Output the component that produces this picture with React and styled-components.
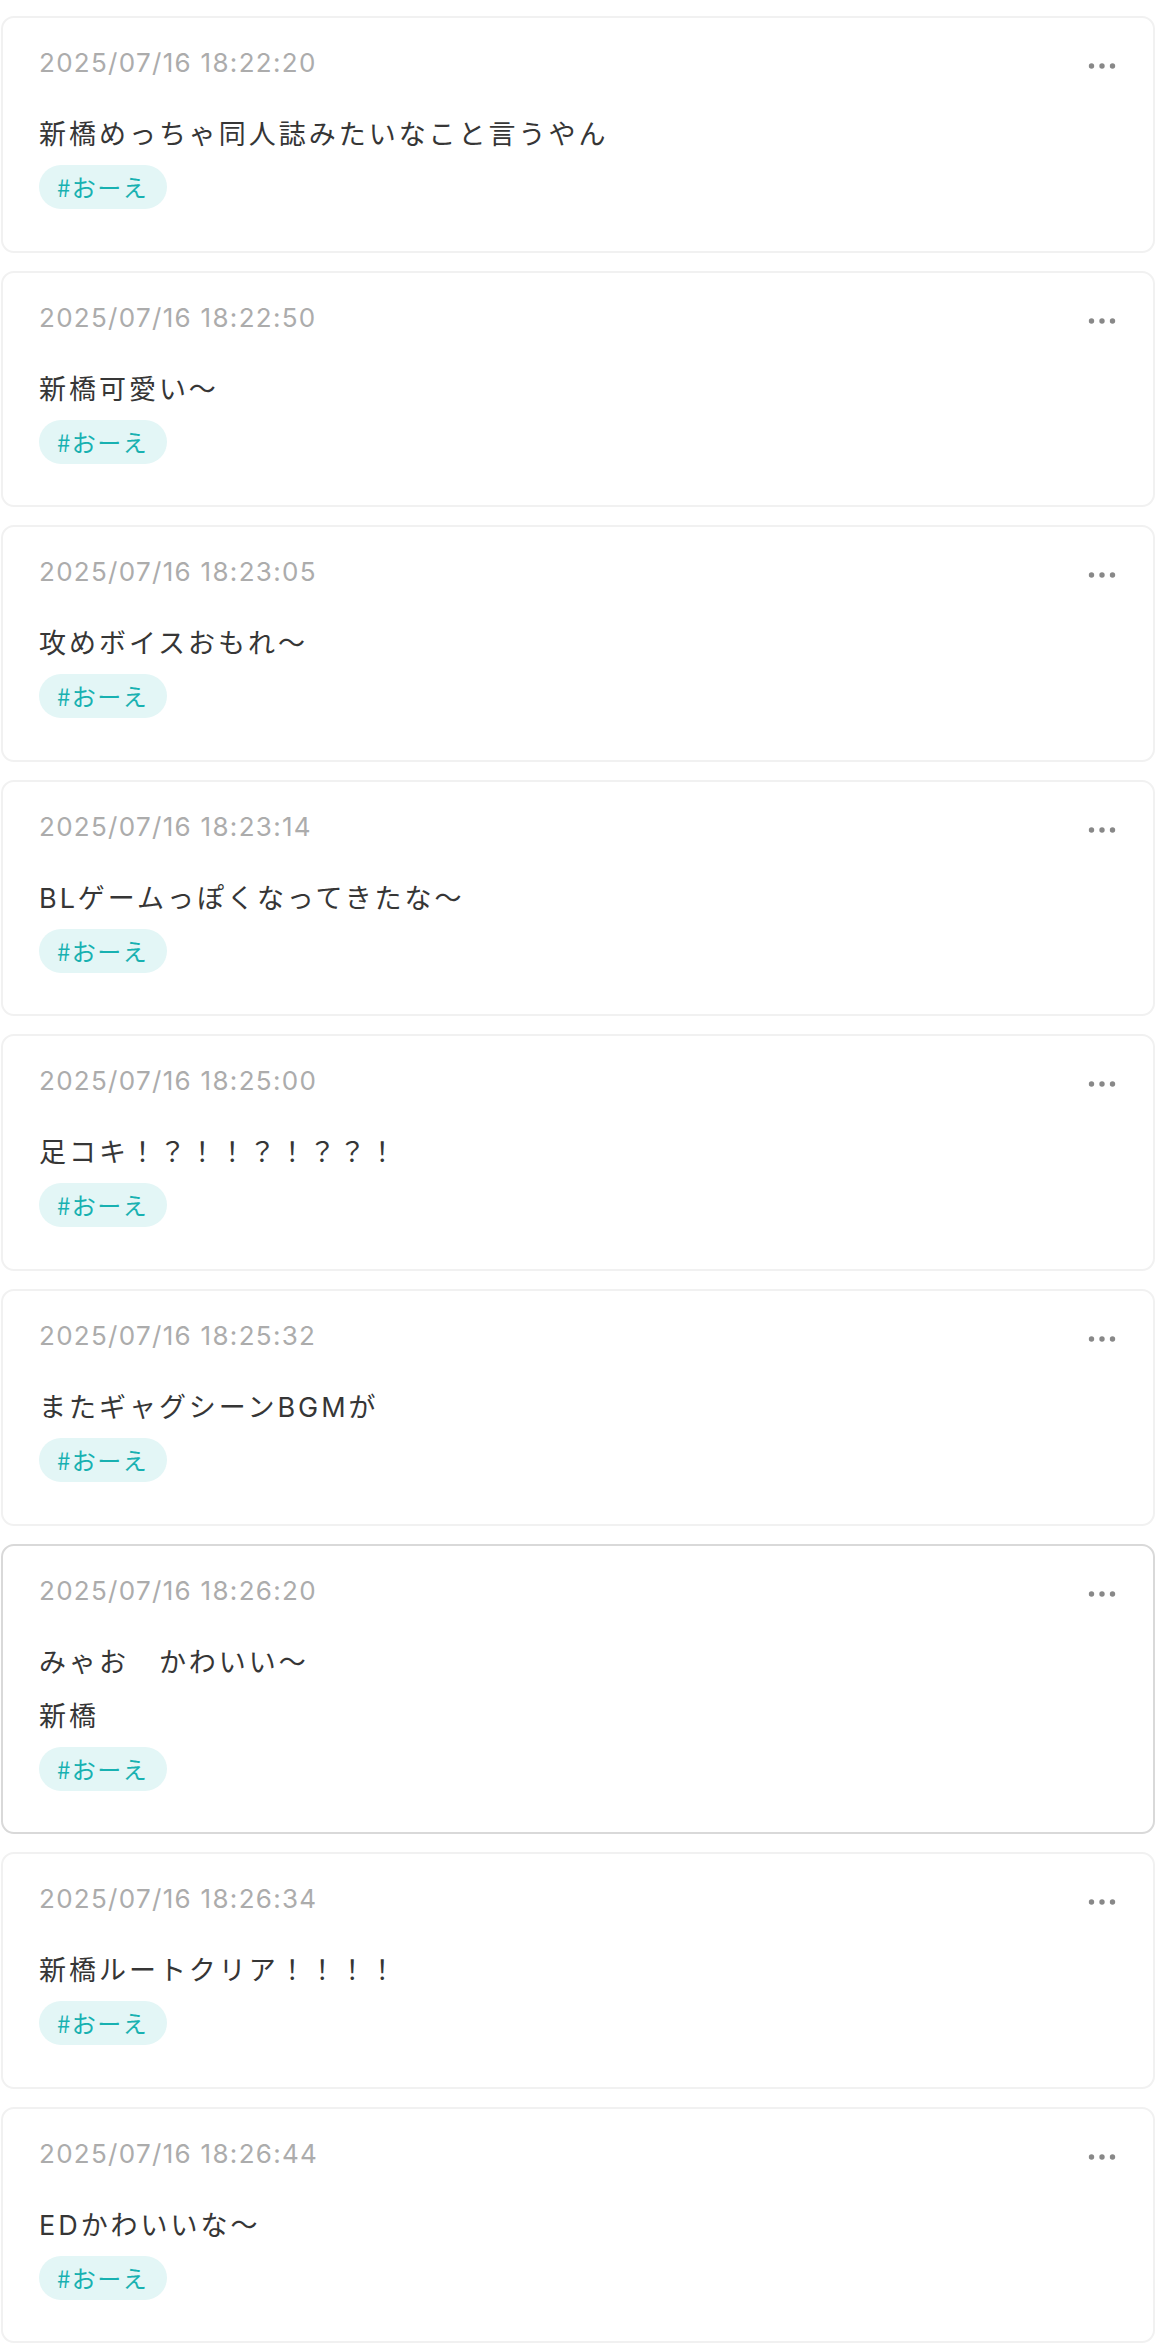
import React from "react";
import styled, { createGlobalStyle } from "styled-components";

const GlobalStyle = createGlobalStyle`
  html, body {
    margin: 0;
    padding: 0;
    background: #ffffff;
  }
  body {
    font-family: "Inter", "Noto Sans CJK JP", sans-serif;
    color: #333333;
  }
`;

const List = styled.main`
  display: flex;
  flex-direction: column;
  gap: 18px;
  padding: 16px 1px 0 1px;
`;

const Card = styled.article`
  display: flex;
  flex-direction: column;
  align-items: flex-start;
  padding: 27px 36px 41.6px 36px;
  border: 2px solid ${(p) => (p.$active ? "#d9d9d9" : "#f1f1f1")};
  border-radius: 13px;
  background: #ffffff;
`;

const Header = styled.header`
  display: flex;
  align-items: center;
  justify-content: space-between;
  align-self: stretch;
  height: 36px;
`;

const Time = styled.time`
  font-family: "Inter", "Noto Sans", sans-serif;
  font-size: 26px;
  line-height: 36px;
  letter-spacing: 0.05em;
  color: #acacac;
`;

const MoreButton = styled.button`
  display: flex;
  align-items: center;
  justify-content: center;
  width: 30px;
  height: 20px;
  padding: 0;
  margin-top: 6px;
  border: none;
  background: transparent;
  cursor: pointer;
`;

const Body = styled.div`
  margin-top: 27px;
  font-family: "Inter", "Noto Sans CJK JP", sans-serif;
  font-size: 27px;
  line-height: 54px;
  letter-spacing: 0.11em;
  color: #363636;
  white-space: pre-wrap;
`;

const Tag = styled.span`
  display: inline-block;
  margin-top: 3px;
  padding: 4px 19px 4px 18px;
  border-radius: 22px;
  background: #e3f6f6;
  color: #18b1b1;
  font-family: "Noto Sans CJK JP", sans-serif;
  font-size: 24px;
  line-height: 36px;
  letter-spacing: 0.06em;
`;

const Dots = () => (
  <svg width="28" height="8" viewBox="0 0 28 8" aria-hidden="true">
    <circle cx="3.5" cy="4" r="2.7" fill="#888888" />
    <circle cx="14" cy="4" r="2.7" fill="#888888" />
    <circle cx="24.5" cy="4" r="2.7" fill="#888888" />
  </svg>
);

const posts = [
  { time: "2025/07/16 18:22:20", text: "新橋めっちゃ同人誌みたいなこと言うやん" },
  { time: "2025/07/16 18:22:50", text: "新橋可愛い〜" },
  { time: "2025/07/16 18:23:05", text: "攻めボイスおもれ〜" },
  { time: "2025/07/16 18:23:14", text: "BLゲームっぽくなってきたな〜" },
  { time: "2025/07/16 18:25:00", text: "足コキ！？！！？！？？！" },
  { time: "2025/07/16 18:25:32", text: "またギャグシーンBGMが" },
  { time: "2025/07/16 18:26:20", text: "みゃお　かわいい〜\n新橋", active: true },
  { time: "2025/07/16 18:26:34", text: "新橋ルートクリア！！！！" },
  { time: "2025/07/16 18:26:44", text: "EDかわいいな〜" },
];

export default function App() {
  return (
    <>
      <GlobalStyle />
      <List>
        {posts.map((p) => (
          <Card key={p.time} $active={p.active}>
            <Header>
              <Time>{p.time}</Time>
              <MoreButton aria-label="more">
                <Dots />
              </MoreButton>
            </Header>
            <Body>{p.text}</Body>
            <Tag>#おーえ</Tag>
          </Card>
        ))}
      </List>
    </>
  );
}
